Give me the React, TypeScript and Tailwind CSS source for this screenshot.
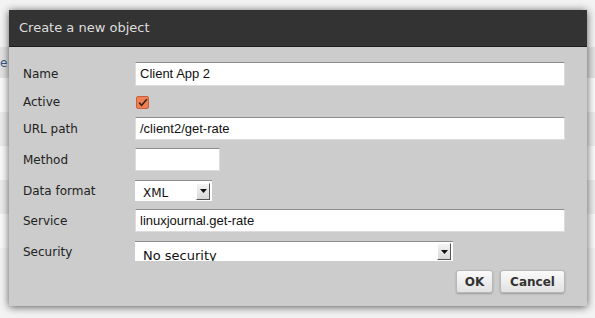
import React from 'react';

const label = "w-[112px] shrink-0 text-[12px] text-[#222] font-['DejaVu_Sans',sans-serif]";
const input =
  "h-full bg-white border border-[#dcdcdc] border-t-[#8c8c8c] pl-[4px] text-[13px] text-[#111] font-['Liberation_Sans',Arial,sans-serif] flex items-center";

function Arrow() {
  return (
    <span className="w-[14px] h-[17px] bg-gradient-to-b from-[#f4f4f4] to-[#d8d8d8] border border-[#fff] border-r-[#555] border-b-[#555] flex items-center justify-center">
      <svg width="7" height="4" viewBox="0 0 7 4">
        <path d="M0 0h7L3.5 4z" fill="#111" />
      </svg>
    </span>
  );
}

function Button({ children, w }: { children: React.ReactNode; w: string }) {
  return (
    <button
      className={`${w} h-[23px] rounded-[3px] border border-[#b8b8b8] bg-gradient-to-b from-[#fafafa] to-[#e2e2e2] shadow-[0_1px_2px_rgba(0,0,0,0.25)] text-[12px] font-bold text-[#333] font-['DejaVu_Sans',sans-serif]`}
    >
      {children}
    </button>
  );
}

export default function App() {
  return (
    <div className="relative w-[595px] h-[318px] bg-[#f3f3f3] overflow-hidden">
      <div className="pt-[47px]">
        <div className="h-[31px] bg-[#e2e2e2] flex items-center text-[12px] text-[#3b5b8c] font-['DejaVu_Sans',sans-serif]">
          e
        </div>
        <div className="h-[34px] bg-[#fafafa]" />
        <div className="h-[34px] bg-[#ececec]" />
        <div className="h-[34px] bg-[#fafafa]" />
        <div className="h-[34px] bg-[#ececec]" />
        <div className="h-[34px] bg-[#fafafa]" />
      </div>

      <div className="absolute left-[9px] top-[10px] w-[578px] shadow-[0_1px_8px_rgba(0,0,0,0.65)]">
        <div className="h-[37px] bg-[#333333] border-b border-[#1e1e1e] flex items-center pl-[10px] text-[13px] text-[#dedede] font-['DejaVu_Sans',sans-serif]">
          Create a new object
        </div>
        <div className="bg-[#cccccc] h-[259px] pl-[14px] pr-[22px] pt-[15px] flex flex-col">
          <div className="flex items-center h-[24px]">
            <span className={label}>Name</span>
            <div className={`${input} flex-1`}>Client App 2</div>
          </div>
          <div className="flex items-center h-[12px] mt-[10px]">
            <span className={label}>Active</span>
            <span className="w-[13px] h-[13px] ml-[1px] rounded-[2px] bg-[#ef7f55] border border-[#c8603c] flex items-center justify-center">
              <svg width="10" height="9" viewBox="0 0 10 9">
                <path d="M1.2 4.6l2.4 2.6L8.8 1.2" stroke="#3a2418" strokeWidth="1.6" fill="none" />
              </svg>
            </span>
          </div>
          <div className="flex items-center h-[23px] mt-[9px]">
            <span className={label}>URL path</span>
            <div className={`${input} flex-1`}>/client2/get-rate</div>
          </div>
          <div className="flex items-center h-[23px] mt-[8px]">
            <span className={label}>Method</span>
            <div className={`${input} w-[85px]`} />
          </div>
          <div className="flex items-center h-[21px] mt-[9px]">
            <span className={label}>Data format</span>
            <div className="h-full w-[77px] bg-white border-t border-[#8c8c8c] flex items-center justify-between pl-[8px] pr-[2px]">
              <span className="text-[12px] text-[#111] font-['DejaVu_Sans',sans-serif] pt-[4px]">XML</span>
              <Arrow />
            </div>
          </div>
          <div className="flex items-center h-[23px] mt-[8px]">
            <span className={label}>Service</span>
            <div className={`${input} flex-1`}>linuxjournal.get-rate</div>
          </div>
          <div className="flex items-start h-[20px] mt-[9px]">
            <span className={`${label} pt-[2px]`}>Security</span>
            <div className="h-full w-[318px] bg-white border-t border-[#8c8c8c] flex items-center justify-between pl-[8px] pr-[2px] overflow-hidden">
              <span className="text-[13px] leading-[16px] text-[#111] font-['DejaVu_Sans',sans-serif] pt-[8px]">No security</span>
              <Arrow />
            </div>
          </div>
          <div className="flex justify-end gap-[7px] h-[23px] mt-[9px]">
            <Button w="w-[37px]">OK</Button>
            <Button w="w-[65px]">Cancel</Button>
          </div>
        </div>
      </div>
    </div>
  );
}
